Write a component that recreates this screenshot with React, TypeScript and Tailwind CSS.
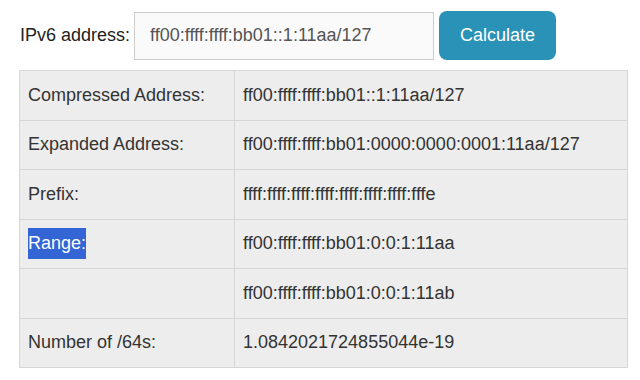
const rows: { label: string; value: string; selected?: boolean }[] = [
  { label: 'Compressed Address:', value: 'ff00:ffff:ffff:bb01::1:11aa/127' },
  { label: 'Expanded Address:', value: 'ff00:ffff:ffff:bb01:0000:0000:0001:11aa/127' },
  { label: 'Prefix:', value: 'ffff:ffff:ffff:ffff:ffff:ffff:ffff:fffe' },
  { label: 'Range:', value: 'ff00:ffff:ffff:bb01:0:0:1:11aa', selected: true },
  { label: '', value: 'ff00:ffff:ffff:bb01:0:0:1:11ab' },
  { label: 'Number of /64s:', value: '1.0842021724855044e-19' },
]

export default function App() {
  return (
    <div className="min-h-[380px] bg-white pl-[19px] pt-[11px] font-['Liberation_Sans',Arial,sans-serif] text-[18px] text-[#333]">
      <form className="flex items-center" onSubmit={(e) => e.preventDefault()}>
        <label htmlFor="ip" className="ml-px mr-[4px] text-[#222]">
          IPv6 address:
        </label>
        <input
          id="ip"
          defaultValue="ff00:ffff:ffff:bb01::1:11aa/127"
          className="h-[48px] w-[300px] border border-[#ccc] bg-[#fafafa] px-[15px] text-[18px] text-[#555] outline-none"
        />
        <button
          type="submit"
          className="ml-[5px] h-[49px] w-[117px] rounded-[8px] bg-[#2b92b7] text-[18px] text-white"
        >
          Calculate
        </button>
      </form>

      <table className="mt-[10px] w-[609px] border-collapse bg-[#ededed]">
        <tbody>
          {rows.map((row, i) => (
            <tr key={i} className="h-[49.5px]">
              <td className="w-[215px] border border-[#d6d6d6] px-[8px]">
                {row.selected ? (
                  <span className="inline-block bg-[#3366d4] py-[5px] leading-[21px] text-white">{row.label}</span>
                ) : (
                  row.label
                )}
              </td>
              <td className="border border-[#d6d6d6] px-[8px]">{row.value}</td>
            </tr>
          ))}
        </tbody>
      </table>
    </div>
  )
}
